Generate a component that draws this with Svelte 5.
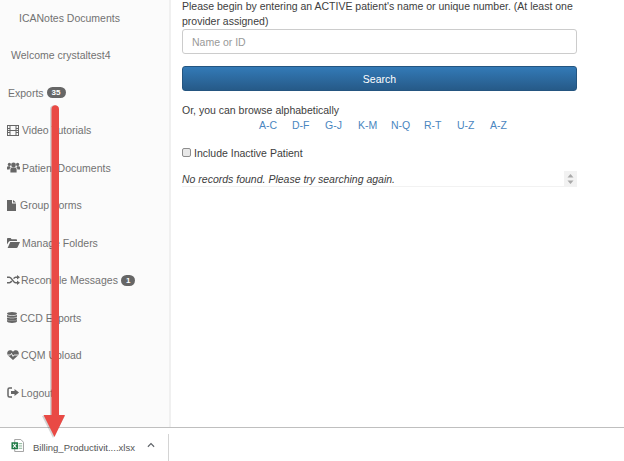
<script>
  const letters = ["A-C", "D-F", "G-J", "K-M", "N-Q", "R-T", "U-Z", "A-Z"];

  const navItems = [
    { label: "ICANotes Documents", cls: "indent-doc" },
    { label: "Welcome crystaltest4", cls: "indent-welcome" },
    { label: "Exports", badge: "35", cls: "indent-plain" },
    { label: "Video Tutorials", icon: "film" },
    { label: "Patient Documents", icon: "users" },
    { label: "Group Forms", icon: "file" },
    { label: "Manage Folders", icon: "folder" },
    { label: "Reconcile Messages", badge: "1", icon: "random" },
    { label: "CCD Exports", icon: "database" },
    { label: "CQM Upload", icon: "heartbeat" },
    { label: "Logout", icon: "logout" },
  ];
</script>

{#snippet navIcon(name)}
  {#if name === "film"}
    <svg class="icon film" viewBox="0 0 12 11">
      <rect x="0.5" y="0.5" width="11" height="10" fill="none" stroke="currentColor" />
      <path d="M3 1v9M9 1v9M3 5.5h6M0.5 3.5H3M0.5 5.5H3M0.5 7.5H3M9 3.5h2.5M9 5.5h2.5M9 7.5h2.5" stroke="currentColor" fill="none" />
    </svg>
  {:else if name === "users"}
    <svg class="icon users" viewBox="0 0 13 11">
      <circle cx="6.5" cy="3" r="2.4" fill="currentColor" />
      <circle cx="2.4" cy="2.4" r="1.6" fill="currentColor" />
      <circle cx="10.6" cy="2.4" r="1.6" fill="currentColor" />
      <path d="M3.4 10.5V7.4c0-1.4 1-2 1.8-2h2.6c.8 0 1.8.6 1.8 2v3.1z" fill="currentColor" />
      <path d="M0 7.4V5.6c0-1 .7-1.4 1.4-1.4h1.5c.2.5.5 1 .9 1.2-.8.3-1.2 1.1-1.2 2zM13 7.4V5.6c0-1-.7-1.4-1.4-1.4h-1.5c-.2.5-.5 1-.9 1.2.8.3 1.2 1.1 1.2 2z" fill="currentColor" />
    </svg>
  {:else if name === "file"}
    <svg class="icon file" viewBox="0 0 9 11">
      <path d="M0 0h5v3.5h4V11H0zM6 0l3 2.5H6z" fill="currentColor" />
    </svg>
  {:else if name === "folder"}
    <svg class="icon folder" viewBox="0 0 13 10">
      <path d="M0 1.2C0 .5.4 0 1 0h2.6l1 1.3H9c.6 0 1 .4 1 1V3H3.2C2.5 3 2 3.4 1.6 4L0 6.6z" fill="currentColor" />
      <path d="M3.3 4H13l-2.4 5.2c-.2.5-.6.8-1.1.8H.6z" fill="currentColor" />
    </svg>
  {:else if name === "random"}
    <svg class="icon random" viewBox="0 0 13 10">
      <path d="M0 2.2h2.4c2.4 0 3.6 5.6 6.2 5.6h1.6M0 7.8h2.4c1 0 1.7-.8 2.4-1.8M6.6 3.6C7.2 2.8 7.8 2.2 8.6 2.2h1.6" fill="none" stroke="currentColor" stroke-width="1.5" />
      <path d="M10 0l3 2.2-3 2.2zM10 5.6l3 2.2-3 2.2z" fill="currentColor" />
    </svg>
  {:else if name === "database"}
    <svg class="icon database" viewBox="0 0 10 11">
      <ellipse cx="5" cy="1.6" rx="5" ry="1.6" fill="currentColor" />
      <path d="M0 2.9c1 1 9 1 10 0v1.6c0 1.8-10 1.8-10 0zM0 5.5c1 1 9 1 10 0v1.7c0 1.8-10 1.8-10 0zM0 8c1 1 9 1 10 0v1.3c0 2.2-10 2.2-10 0z" fill="currentColor" />
    </svg>
  {:else if name === "heartbeat"}
    <svg class="icon heartbeat" viewBox="0 0 12 10">
      <path d="M6 10L1 5.4C-.6 3.6.2.4 3 .2 4.400.1 5.400.8 6 1.800 6.600.8 7.600.1 9 .2c2.800.2 3.600 3.400 2 5.200z" fill="currentColor" />
      <path d="M0.500 5h3l1-1.600 1.500 3 1-1.400h4.500" fill="none" stroke="#fafafa" stroke-width="0.9" />
    </svg>
  {:else if name === "logout"}
    <svg class="icon logout" viewBox="0 0 12 11">
      <path d="M5 1H2.500C1.500 1 1 1.600 1 2.500v6C1 9.400 1.500 10 2.500 10H5" fill="none" stroke="currentColor" stroke-width="1.500" />
      <path d="M7.500 2L12 5.500 7.500 9V7H4V4h3.500z" fill="currentColor" />
    </svg>
  {/if}
{/snippet}

<div class="page">
  <div class="content">
    <nav class="sidebar">
      {#each navItems as item}
        <div class="nav-item {item.cls ?? ''}">
          {#if item.icon}{@render navIcon(item.icon)}{/if}
          <span>{item.label}</span>
          {#if item.badge}<span class="badge">{item.badge}</span>{/if}
        </div>
      {/each}
    </nav>

    <main class="main">
      <p class="intro">Please begin by entering an ACTIVE patient's name or unique number. (At least one provider assigned)</p>
      <input class="search-input" type="text" placeholder="Name or ID" />
      <button class="search-btn">Search</button>
      <p class="browse">Or, you can browse alphabetically</p>
      <div class="letters">
        {#each letters as letter}
          <span class="letter">{letter}</span>
        {/each}
      </div>
      <label class="inactive">
        <span class="checkbox"></span>
        Include Inactive Patient
      </label>
      <div class="results">
        <em>No records found. Please try searching again.</em>
        <span class="spinner">
          <svg viewBox="0 0 7 12" width="7" height="12">
            <path d="M3.500 1L6.500 4.500H.5zM.5 7.500h6L3.500 11z" fill="#a9a9a9" />
          </svg>
        </span>
      </div>
    </main>
  </div>

  <footer class="download-bar">
    <svg class="xlsx" viewBox="0 0 14 14" width="13" height="13">
      <path d="M4 .5h6.500L13.500 3.500v10H4z" fill="#fff" stroke="#9a9a9a" />
      <path d="M8 5h4M8 7.500h4M8 10h4" stroke="#7fb08f" />
      <rect x="0.500" y="3.500" width="7" height="7.500" fill="#1e7a45" />
      <path d="M2.200 5.200l3.500 4.200M5.700 5.200L2.200 9.400" stroke="#fff" stroke-width="1.100" />
    </svg>
    <span class="filename">Billing_Productivit....xlsx</span>
    <svg class="chevron" viewBox="0 0 9 6" width="8" height="6">
      <path d="M1 5l3.500-3.500L8 5" fill="none" stroke="#5f6368" stroke-width="1.300" />
    </svg>
    <span class="bar-divider"></span>
  </footer>

  <svg class="arrow" viewBox="0 0 24 333" width="24" height="333">
    <path d="M9 4c0-5 8-5 8 0V311h7L12 333 1 311h8z" fill="#000" opacity="0.160" transform="translate(-1 0)" />
    <path d="M9.500 4c0-5 7.500-5 7.500 0V310h6L12.500 332 1.500 310h8z" fill="#e94a45" />
  </svg>
</div>

<style>
  :global(body) {
    margin: 0;
  }

  .page {
    position: relative;
    width: 624px;
    height: 461px;
    overflow: hidden;
    background: #fff;
    font-family: "Liberation Sans", Arial, sans-serif;
    font-size: 10.500px;
    color: #3d3d3d;
  }

  .content {
    display: flex;
    height: 427px;
  }

  .sidebar {
    box-sizing: border-box;
    width: 171px;
    flex-shrink: 0;
    background: #fbfbfb;
    border-right: 2px solid #f0f0f0;
    display: flex;
    flex-direction: column;
  }

  .nav-item {
    box-sizing: border-box;
    height: 37.500px;
    flex-shrink: 0;
    display: flex;
    align-items: center;
    padding: 0 0 2px 7px;
    color: #727272;
    white-space: nowrap;
  }

  .indent-doc {
    padding-left: 19px;
  }

  .indent-welcome {
    padding-left: 11px;
  }

  .indent-plain {
    padding-left: 8px;
  }

  .icon {
    flex-shrink: 0;
    margin-right: 3px;
    color: #666;
  }

  .film {
    width: 12px;
    height: 11px;
  }

  .users {
    width: 13px;
    height: 11px;
    margin-right: 2px;
  }

  .file {
    width: 9px;
    height: 11px;
    margin-right: 4px;
  }

  .folder {
    width: 13px;
    height: 10px;
    margin-right: 2px;
  }

  .random {
    width: 13px;
    height: 10px;
    margin-right: 1px;
  }

  .database {
    width: 10px;
    height: 11px;
    margin-right: 3px;
  }

  .heartbeat {
    width: 12px;
    height: 10px;
    margin-right: 2px;
  }

  .logout {
    width: 12px;
    height: 11px;
    margin-right: 2px;
  }

  .badge {
    margin-left: 3px;
    background: #666;
    color: #fff;
    font-size: 8px;
    font-weight: 700;
    line-height: 11px;
    padding: 0 5px;
    border-radius: 6px;
  }

  .main {
    box-sizing: border-box;
    width: 406px;
    padding: 0 0 0 11px;
  }

  .intro {
    margin: 0;
    line-height: 15px;
    margin-top: -1px;
  }

  .search-input {
    display: block;
    box-sizing: border-box;
    width: 395px;
    height: 25px;
    margin-top: 0;
    padding: 0 9px;
    border: 1px solid #ccc;
    border-radius: 3px;
    background: #fff;
    font: 10.500px "Liberation Sans", Arial, sans-serif;
    color: #333;
  }

  .search-input::placeholder {
    color: #999;
    opacity: 1;
  }

  .search-btn {
    display: block;
    box-sizing: border-box;
    width: 395px;
    height: 25px;
    margin-top: 12px;
    padding: 0;
    border: 1px solid #245580;
    border-radius: 3px;
    background: linear-gradient(to bottom, #337ab7, #265a88);
    color: #fff;
    font: 10.500px "Liberation Sans", Arial, sans-serif;
  }

  .browse {
    margin: 12px 0 0;
    line-height: 14px;
  }

  .letters {
    display: grid;
    grid-template-columns: repeat(8, 33px);
    padding-left: 77px;
    margin-top: 1px;
    line-height: 14px;
  }

  .letter {
    color: #4a86c0;
  }

  .inactive {
    display: flex;
    align-items: center;
    gap: 3px;
    margin-top: 14px;
    line-height: 14px;
  }

  .checkbox {
    box-sizing: border-box;
    width: 9px;
    height: 9px;
    margin-bottom: 2px;
    border: 1px solid #8d8d8d;
    border-radius: 2px;
    background: #e8e8e8;
  }

  .results {
    box-sizing: border-box;
    width: 395px;
    height: 16px;
    margin-top: 11px;
    display: flex;
    align-items: center;
    justify-content: space-between;
    border-bottom: 1px solid #f2f2f2;
  }

  .spinner {
    width: 13px;
    height: 15px;
    background: #f2f2f2;
    display: flex;
    align-items: center;
    justify-content: center;
  }

  .download-bar {
    box-sizing: border-box;
    height: 34px;
    border-top: 1px solid #bfbfbf;
    background: #fff;
    display: flex;
    align-items: center;
    padding: 5px 0 0 11px;
  }

  .xlsx {
    flex-shrink: 0;
    margin-top: -3px;
  }

  .filename {
    margin-left: 9px;
    width: 114px;
    color: #555;
    font-size: 9.500px;
  }

  .chevron {
    margin-left: 0;
    margin-bottom: 4px;
  }

  .bar-divider {
    width: 1px;
    height: 27px;
    background: #d4d4d4;
    margin-left: 13px;
  }

  .arrow {
    position: absolute;
    left: 42px;
    top: 105px;
  }
</style>
